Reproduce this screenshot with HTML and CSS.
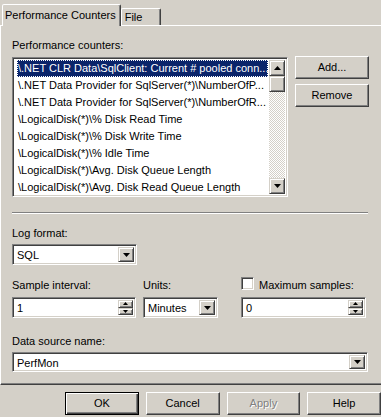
FILE: index.html
```html
<!DOCTYPE html>
<html lang="en">
<head>
  <meta charset="UTF-8"/>
  <title>Performance Counters</title>
  <link rel="stylesheet" href="styles.css">
</head>
<body>
  <div class="tabs">
    <div class="tab active">Performance Counters</div>
    <div class="tab file">File</div>
  </div>

  <div class="panel">
    <div class="label">Performance counters:</div>
    <div class="counters">
      <div class="listbox">
        <ul class="items">
          <li class="selected">\.NET CLR Data\SqlClient: Current # pooled conn...</li>
          <li>\.NET Data Provider for SqlServer(*)\NumberOfP...</li>
          <li>\.NET Data Provider for SqlServer(*)\NumberOfR...</li>
          <li>\LogicalDisk(*)\% Disk Read Time</li>
          <li>\LogicalDisk(*)\% Disk Write Time</li>
          <li>\LogicalDisk(*)\% Idle Time</li>
          <li>\LogicalDisk(*)\Avg. Disk Queue Length</li>
          <li>\LogicalDisk(*)\Avg. Disk Read Queue Length</li>
        </ul>
        <div class="vscroll">
          <div class="sbtn raised"><svg width="7" height="4"><path d="M3.5 0L7 4H0z"/></svg></div>
          <div class="thumb raised"></div>
          <div class="track"></div>
          <div class="sbtn raised"><svg width="7" height="4"><path d="M0 0h7L3.5 4z"/></svg></div>
        </div>
      </div>
      <div class="side">
        <button class="btn">Add...</button>
        <button class="btn">Remove</button>
      </div>
    </div>

    <div class="sep"></div>

    <div class="label gap-sep">Log format:</div>
    <div class="combo fmt">
      <span class="value">SQL</span>
      <span class="drop raised"><svg width="7" height="4"><path d="M0 0h7L3.5 4z"/></svg></span>
    </div>

    <div class="fields">
      <div class="field interval">
        <div class="label">Sample interval:</div>
        <div class="spin">
          <span class="value">1</span>
          <span class="spinbtns">
            <span class="raised"><svg width="5" height="3"><path d="M2.5 0L5 3H0z"/></svg></span>
            <span class="raised"><svg width="5" height="3"><path d="M0 0h5L2.5 3z"/></svg></span>
          </span>
        </div>
      </div>
      <div class="field units">
        <div class="label">Units:</div>
        <div class="combo">
          <span class="value">Minutes</span>
          <span class="drop raised"><svg width="7" height="4"><path d="M0 0h7L3.5 4z"/></svg></span>
        </div>
      </div>
      <div class="field maxs">
        <div class="label checkrow"><span class="check"></span>Maximum samples:</div>
        <div class="spin">
          <span class="value">0</span>
          <span class="spinbtns">
            <span class="raised"><svg width="5" height="3"><path d="M2.5 0L5 3H0z"/></svg></span>
            <span class="raised"><svg width="5" height="3"><path d="M0 0h5L2.5 3z"/></svg></span>
          </span>
        </div>
      </div>
    </div>

    <div class="label gap-dsn">Data source name:</div>
    <div class="combo dsn">
      <span class="value">PerfMon</span>
      <span class="drop raised"><svg width="7" height="4"><path d="M0 0h7L3.5 4z"/></svg></span>
    </div>
  </div>

  <div class="actions">
    <button class="btn default">OK</button>
    <button class="btn">Cancel</button>
    <button class="btn" disabled>Apply</button>
    <button class="btn">Help</button>
  </div>
</body>
</html>
```

FILE: styles.css
```css
* { margin:0; padding:0; box-sizing:border-box }
body {
  width:381px; height:417px; overflow:hidden;
  background:#D4D0C8; color:#000;
  font:11px/13px "Liberation Sans", Arial, sans-serif;
}

/* Classic 3D edges */
.raised {
  background:#D4D0C8;
  border:1px solid; border-color:#D4D0C8 #404040 #404040 #D4D0C8;
  box-shadow:inset 1px 1px #fff, inset -1px -1px #808080;
  display:flex; align-items:center; justify-content:center;
}

/* Tabs */
.tabs {
  display:flex; align-items:flex-end;
  height:25px; padding-left:2px;
}
.tab {
  height:17px; padding:2px 0 0 3px;
  border:1px solid; border-bottom:none;
  border-color:#fff #404040 transparent #fff;
  box-shadow:inset -1px 0 #808080;
  border-radius:2px 2px 0 0;
}
.tab.active {
  height:22px; padding:4px 4px 0 2px;
  margin-bottom:-1px; position:relative; z-index:1;
  background:#D4D0C8;
}
.tab.file { width:40px }

/* Panel */
.panel {
  height:360px;
  border-top:1px solid #fff; border-left:1px solid #fff;
  border-bottom:1px solid #404040;
  box-shadow:inset 0 -1px #808080;
  padding:13px 0 0 11px;
}
.label { height:13px; white-space:nowrap }

.counters { display:flex; align-items:flex-start; margin-top:4px }
.listbox {
  display:flex; width:276px; height:140px; margin-top:1px;
  background:#fff; padding:2px;
  border:1px solid; border-color:#808080 #fff #fff #808080;
  box-shadow:inset 1px 1px #404040, inset -1px -1px #D4D0C8;
}
.items {
  flex:1; min-width:0; list-style:none;
  padding:0 1px 0 2px;
}
.items li {
  height:17px; line-height:17px; padding-left:1px;
  white-space:nowrap; overflow:hidden;
}
.items li.selected {
  background:#0A246A; color:#fff;
  outline:1px dotted #fff; outline-offset:-1px;
}
.vscroll { width:16px; display:flex; flex-direction:column }
.sbtn { height:16px }
.thumb { height:16px }
.track {
  flex:1;
  background:repeating-conic-gradient(#D4D0C8 0 25%, #fff 0 50%) 0 0/2px 2px;
}

.side { display:flex; flex-direction:column; gap:5px; margin-left:7px }
.btn {
  width:74px; height:23px;
  font:inherit; color:#000; background:#D4D0C8;
  border:1px solid; border-color:#fff #404040 #404040 #fff;
  box-shadow:inset -1px -1px #808080;
}
.btn.default {
  border:1px solid #000;
  box-shadow:inset 1px 1px #fff, inset -1px -1px #404040, inset -2px -2px #808080;
}
.btn:disabled { color:#808080; text-shadow:1px 1px #fff }

.sep {
  width:356px; height:2px; margin-top:15px;
  border-top:1px solid #808080; border-bottom:1px solid #fff;
}
.gap-sep { margin-top:13px }
.gap-dsn { margin-top:17px }

/* Combo and spin boxes */
.combo, .spin {
  display:flex; height:21px; margin-top:4px;
  background:#fff; padding:2px;
  border:1px solid; border-color:#808080 #fff #fff #808080;
  box-shadow:inset 1px 1px #404040, inset -1px -1px #D4D0C8;
}
.value { flex:1; padding-left:2px; line-height:17px; white-space:nowrap }
.drop { width:16px }
.combo.fmt { width:125px }
.combo.dsn { width:356px; height:20px }
.combo.dsn .value { line-height:16px }
.spinbtns { width:15px; display:flex; flex-direction:column }
.spinbtns span { flex:1 }

.fields { display:flex; margin-top:14px }
.field .spin, .field .combo { margin-top:5px }
.interval { width:124px }
.units { width:75px; margin-left:7px }
.maxs { width:125px; margin-left:23px }
.checkrow { display:flex; align-items:center; gap:5px }
.check {
  width:13px; height:13px; margin-top:-5px; background:#fff;
  border:1px solid; border-color:#808080 #fff #fff #808080;
  box-shadow:inset 1px 1px #404040, inset -1px -1px #D4D0C8;
}

/* Dialog buttons */
.actions { display:flex; gap:7px; padding-left:65px; margin-top:7px }
```
